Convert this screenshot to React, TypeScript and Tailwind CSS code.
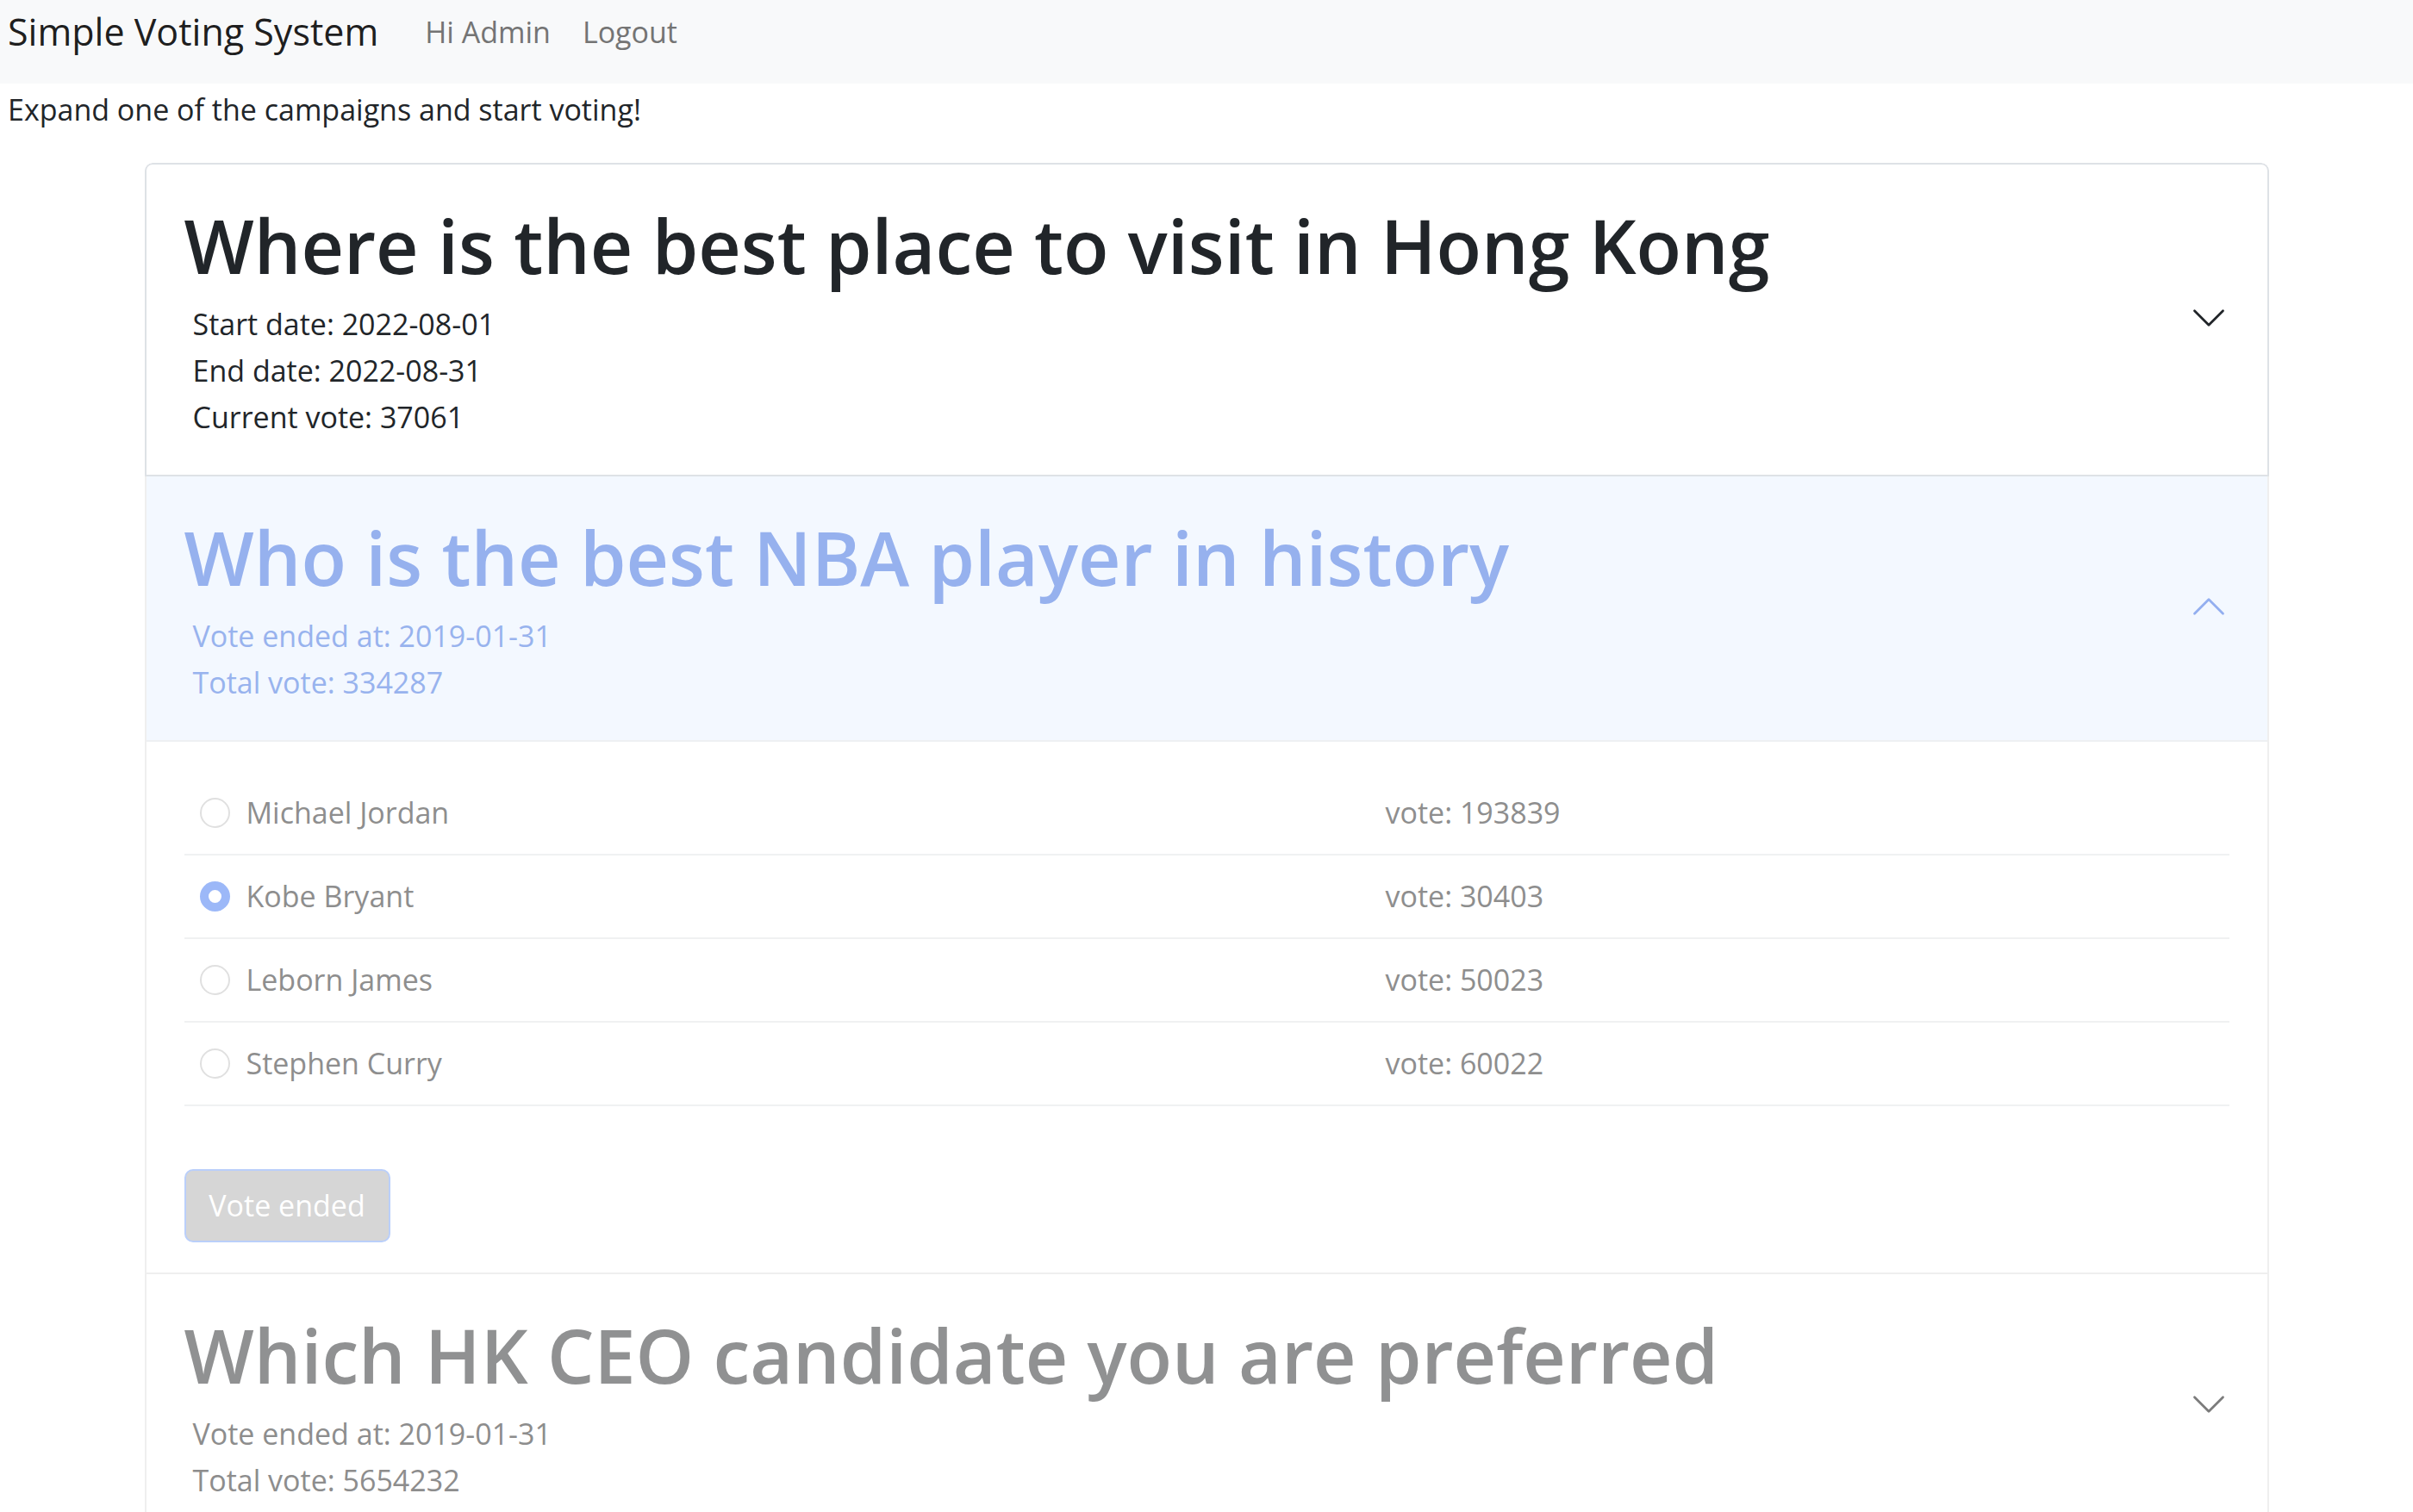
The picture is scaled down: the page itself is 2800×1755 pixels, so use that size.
import React from 'react'

interface Option {
  name: string
  votes: number
  selected?: boolean
}

interface Campaign {
  title: string
  ended: boolean
  expanded: boolean
  start?: string
  end: string
  total: number
  options?: Option[]
}

const campaigns: Campaign[] = [
  {
    title: 'Where is the best place to visit in Hong Kong',
    ended: false,
    expanded: false,
    start: '2022-08-01',
    end: '2022-08-31',
    total: 37061,
  },
  {
    title: 'Who is the best NBA player in history',
    ended: true,
    expanded: true,
    end: '2019-01-31',
    total: 334287,
    options: [
      { name: 'Michael Jordan', votes: 193839 },
      { name: 'Kobe Bryant', votes: 30403, selected: true },
      { name: 'Leborn James', votes: 50023 },
      { name: 'Stephen Curry', votes: 60022 },
    ],
  },
  {
    title: 'Which HK CEO candidate you are preferred',
    ended: true,
    expanded: false,
    end: '2019-01-31',
    total: 5654232,
  },
]

// bootstrap accordion chevron
function Chevron({ up, className }: { up?: boolean; className?: string }) {
  return (
    <svg viewBox="0 0 16 16" className={`w-[44px] h-[44px] shrink-0 ${up ? 'rotate-180' : ''} ${className ?? ''}`} fill="currentColor">
      <path
        fillRule="evenodd"
        d="M1.646 4.646a.5.5 0 0 1 .708 0L8 10.293l5.646-5.647a.5.5 0 0 1 .708.708l-6 6a.5.5 0 0 1-.708 0l-6-6a.5.5 0 0 1 0-.708z"
      />
    </svg>
  )
}

function Radio({ checked }: { checked?: boolean }) {
  if (checked) {
    return (
      <span className="w-[35px] h-[35px] rounded-full bg-[#9cb8f8] flex items-center justify-center shrink-0">
        <span className="w-[15px] h-[15px] rounded-full bg-white" />
      </span>
    )
  }
  return <span className="w-[35px] h-[35px] rounded-full border-2 border-[#e0e0e0] bg-white shrink-0" />
}

function CampaignHeader({ c }: { c: Campaign }) {
  const active = c.expanded
  const headColor = !c.ended ? 'text-[#212529]' : active ? 'text-[#96b1ee]' : 'text-[#909192]'
  const subColor = !c.ended ? 'text-[#212529]' : active ? 'text-[#98b3ee]' : 'text-[#8d8d8d]'
  const iconColor = !c.ended ? 'text-[#212529]' : active ? 'text-[#93aff0]' : 'text-[#7c7c7c]'

  return (
    <div
      className={`flex items-center pl-[44px] pr-[46px] pt-[35px] pb-[40px] ${
        active ? 'bg-[#f3f8ff] border-b-2 border-[#eef0f3]' : ''
      }`}
    >
      <div className="flex-1">
        <h1 className={`text-[86px] leading-[106px] font-semibold mt-[6px] mb-[11px] ${headColor}`}>{c.title}</h1>
        <div className={`pl-[10px] text-[34px] leading-[54px] ${subColor}`}>
          {c.ended ? (
            <>
              <div>Vote ended at: {c.end}</div>
              <div>Total vote: {c.total}</div>
            </>
          ) : (
            <>
              <div>Start date: {c.start}</div>
              <div>End date: {c.end}</div>
              <div>Current vote: {c.total}</div>
            </>
          )}
        </div>
      </div>
      <Chevron up={active} className={iconColor} />
    </div>
  )
}

function CampaignBody({ c }: { c: Campaign }) {
  return (
    <div className="px-[44px] pt-[35px] pb-[35px]">
      {c.options?.map(o => (
        <div key={o.name} className="flex items-center h-[97px] border-b-2 border-[#f0f1f2] text-[34px] text-[#8e8e8e]">
          <div className="w-[1394px] flex items-center pl-[18px] gap-[19px]">
            <Radio checked={o.selected} />
            <span>{o.name}</span>
          </div>
          <div>vote: {o.votes}</div>
        </div>
      ))}
      <button
        disabled
        className="mt-[73px] w-[239px] h-[85px] rounded-[10px] bg-[#d6d6d6] border-2 border-[#bacffa] text-white text-[34px]"
      >
        Vote ended
      </button>
    </div>
  )
}

export default function App() {
  return (
    <div className="min-h-screen bg-white font-['Open_Sans',sans-serif] text-[#212529]">
      {/* Navbar */}
      <nav className="h-[97px] bg-[#f8f9fa] flex items-start pt-[8px] pl-[9px]">
        <span className="text-[43px] leading-[58px] text-[#000000e6] mr-[54px]">Simple Voting System</span>
        <span className="text-[34px] leading-[58px] text-[#747474] mr-[37px]">Hi Admin</span>
        <span className="text-[34px] leading-[58px] text-[#747474]">Logout</span>
      </nav>

      <p className="pl-[9px] pt-[3px] text-[34px] leading-[54px]">Expand one of the campaigns and start voting!</p>

      {/* Campaign accordion */}
      <div className="mt-[35px] w-[2465px] mx-auto rounded-t-[9px] overflow-hidden">
        {campaigns.map((c, i) => (
          <div
            key={c.title}
            className={
              i === 0
                ? 'border-2 border-[#dee2e6] rounded-t-[9px]'
                : 'border-x-2 border-b-2 border-[#efefef]'
            }
          >
            <CampaignHeader c={c} />
            {c.expanded && <CampaignBody c={c} />}
          </div>
        ))}
      </div>
    </div>
  )
}
